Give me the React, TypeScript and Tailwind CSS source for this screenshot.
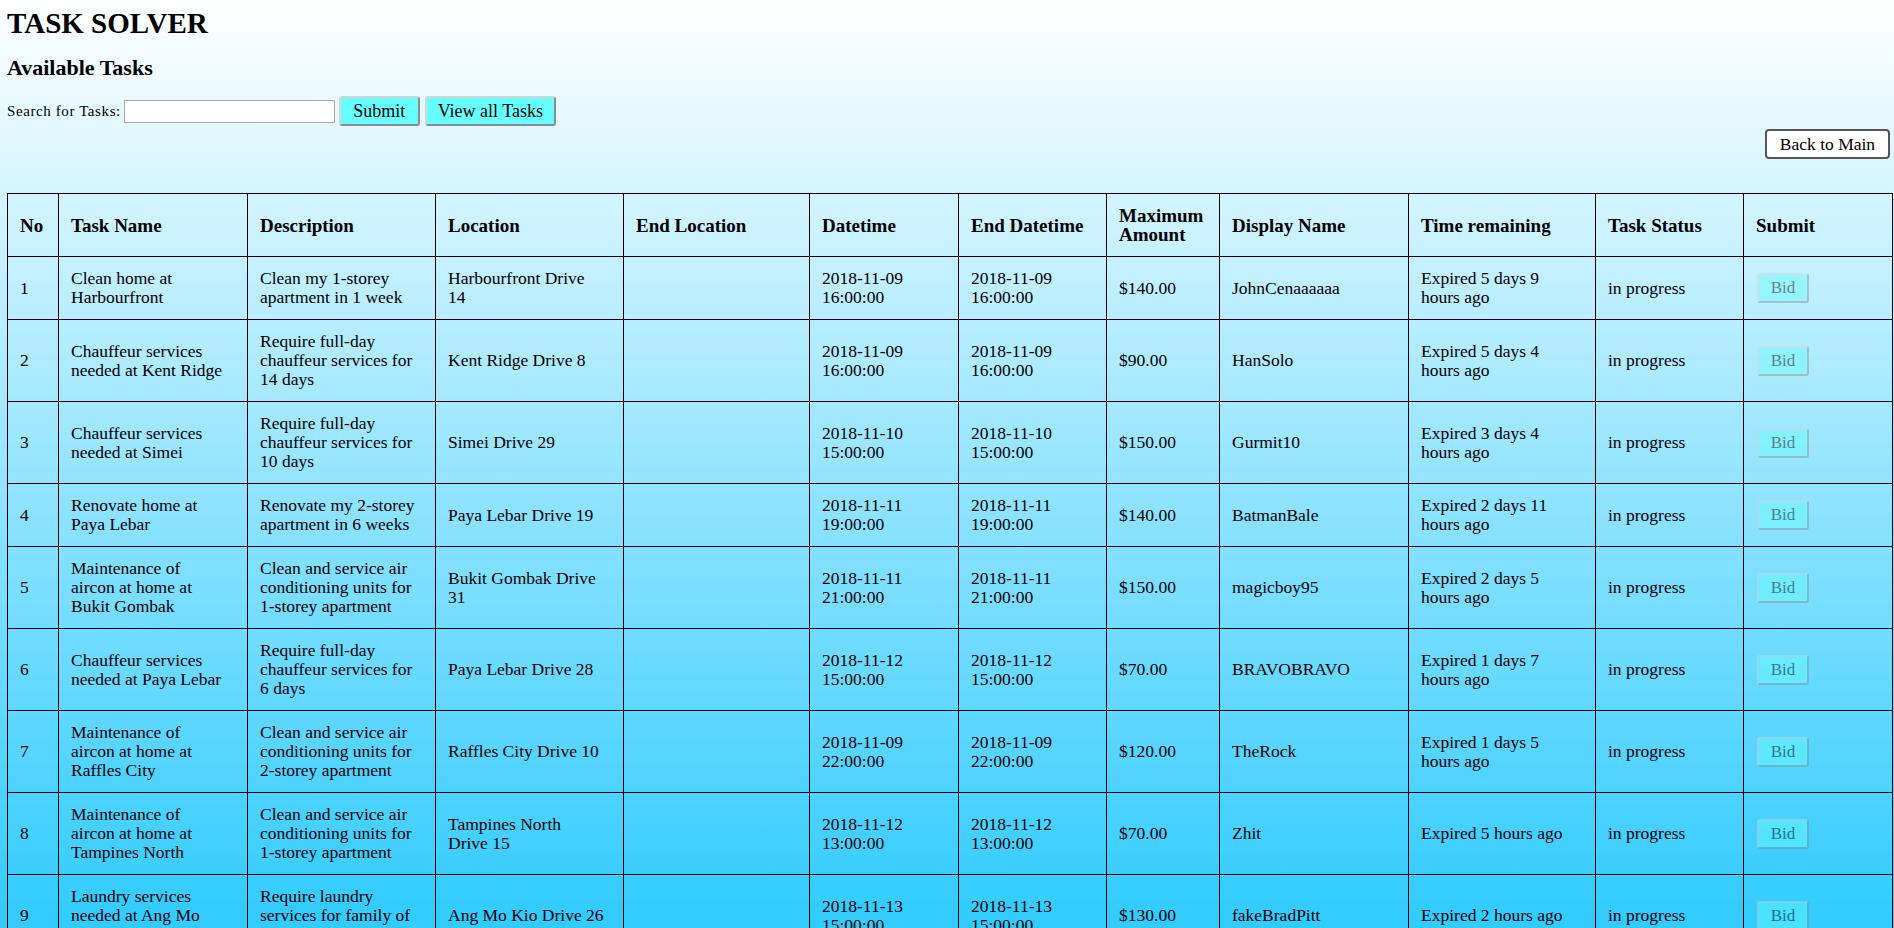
import React from "react";

type Row = {
  no: string;
  name: string[];
  desc: string[];
  loc: string[];
  start: string[];
  end: string[];
  amount: string;
  display: string;
  remain: string[];
};

const rows: Row[] = [
  {
    no: "1",
    name: ["Clean home at", "Harbourfront"],
    desc: ["Clean my 1-storey", "apartment in 1 week"],
    loc: ["Harbourfront Drive", "14"],
    start: ["2018-11-09", "16:00:00"],
    end: ["2018-11-09", "16:00:00"],
    amount: "$140.00",
    display: "JohnCenaaaaaa",
    remain: ["Expired 5 days 9", "hours ago"],
  },
  {
    no: "2",
    name: ["Chauffeur services", "needed at Kent Ridge"],
    desc: ["Require full-day", "chauffeur services for", "14 days"],
    loc: ["Kent Ridge Drive 8"],
    start: ["2018-11-09", "16:00:00"],
    end: ["2018-11-09", "16:00:00"],
    amount: "$90.00",
    display: "HanSolo",
    remain: ["Expired 5 days 4", "hours ago"],
  },
  {
    no: "3",
    name: ["Chauffeur services", "needed at Simei"],
    desc: ["Require full-day", "chauffeur services for", "10 days"],
    loc: ["Simei Drive 29"],
    start: ["2018-11-10", "15:00:00"],
    end: ["2018-11-10", "15:00:00"],
    amount: "$150.00",
    display: "Gurmit10",
    remain: ["Expired 3 days 4", "hours ago"],
  },
  {
    no: "4",
    name: ["Renovate home at", "Paya Lebar"],
    desc: ["Renovate my 2-storey", "apartment in 6 weeks"],
    loc: ["Paya Lebar Drive 19"],
    start: ["2018-11-11", "19:00:00"],
    end: ["2018-11-11", "19:00:00"],
    amount: "$140.00",
    display: "BatmanBale",
    remain: ["Expired 2 days 11", "hours ago"],
  },
  {
    no: "5",
    name: ["Maintenance of", "aircon at home at", "Bukit Gombak"],
    desc: ["Clean and service air", "conditioning units for", "1-storey apartment"],
    loc: ["Bukit Gombak Drive", "31"],
    start: ["2018-11-11", "21:00:00"],
    end: ["2018-11-11", "21:00:00"],
    amount: "$150.00",
    display: "magicboy95",
    remain: ["Expired 2 days 5", "hours ago"],
  },
  {
    no: "6",
    name: ["Chauffeur services", "needed at Paya Lebar"],
    desc: ["Require full-day", "chauffeur services for", "6 days"],
    loc: ["Paya Lebar Drive 28"],
    start: ["2018-11-12", "15:00:00"],
    end: ["2018-11-12", "15:00:00"],
    amount: "$70.00",
    display: "BRAVOBRAVO",
    remain: ["Expired 1 days 7", "hours ago"],
  },
  {
    no: "7",
    name: ["Maintenance of", "aircon at home at", "Raffles City"],
    desc: ["Clean and service air", "conditioning units for", "2-storey apartment"],
    loc: ["Raffles City Drive 10"],
    start: ["2018-11-09", "22:00:00"],
    end: ["2018-11-09", "22:00:00"],
    amount: "$120.00",
    display: "TheRock",
    remain: ["Expired 1 days 5", "hours ago"],
  },
  {
    no: "8",
    name: ["Maintenance of", "aircon at home at", "Tampines North"],
    desc: ["Clean and service air", "conditioning units for", "1-storey apartment"],
    loc: ["Tampines North", "Drive 15"],
    start: ["2018-11-12", "13:00:00"],
    end: ["2018-11-12", "13:00:00"],
    amount: "$70.00",
    display: "Zhit",
    remain: ["Expired 5 hours ago"],
  },
  {
    no: "9",
    name: ["Laundry services", "needed at Ang Mo", "Kio"],
    desc: ["Require laundry", "services for family of", "four"],
    loc: ["Ang Mo Kio Drive 26"],
    start: ["2018-11-13", "15:00:00"],
    end: ["2018-11-13", "15:00:00"],
    amount: "$130.00",
    display: "fakeBradPitt",
    remain: ["Expired 2 hours ago"],
  },
];

const colWidths = [51, 189, 188, 188, 186, 149, 148, 113, 189, 187, 148, 149];

function Lines({ lines }: { lines: string[] }) {
  return (
    <>
      {lines.map((l, i) => (
        <React.Fragment key={i}>
          {i > 0 && <br />}
          {l}
        </React.Fragment>
      ))}
    </>
  );
}

const td =
  "border border-black px-3 py-3 align-middle text-left whitespace-nowrap text-[17.5px] leading-[19px] font-normal";
const th =
  "border border-black px-3 py-3 align-middle text-left whitespace-nowrap text-[19px] leading-[19px] font-bold";

const cyanBtn =
  "bg-[#66ffff] text-black rounded-[3px] border-2 border-t-[#d4d4d4] border-l-[#d4d4d4] border-b-[#8c8c8c] border-r-[#8c8c8c]";

export default function App() {
  return (
    <div
      className="min-h-screen w-full bg-[linear-gradient(to_bottom,#ffffff_0px,#33ccff_910px,#22c6ff_1150px)] text-black pb-10"
      style={{ fontFamily: '"Liberation Serif", "Times New Roman", serif' }}
    >
      <div className="pl-[7px]">
        <h1 className="pt-[9px] text-[29px] leading-[29px] font-bold">TASK SOLVER</h1>
        <h2 className="mt-[19px] text-[22px] leading-[22px] font-bold">Available Tasks</h2>
        <div className="mt-[17px] flex h-[30px] items-center">
          <span className="text-[15px] leading-[17px] tracking-[0.6px]">Search for Tasks:</span>
          <input
            type="text"
            className="ml-[3px] h-[23px] w-[211px] border border-[#a9a9a9] bg-white px-1 outline-none"
          />
          <button className={`ml-[4px] h-[30px] w-[81px] text-[18px] leading-[20px] ${cyanBtn}`}>
            Submit
          </button>
          <button className={`ml-[5px] h-[30px] w-[131px] text-[18px] leading-[20px] ${cyanBtn}`}>
            View all Tasks
          </button>
        </div>
      </div>
      <div className="mt-[3px] flex justify-end pr-[4px]">
        <button className="h-[30px] w-[125px] rounded-[4px] border-2 border-[#555555] bg-white text-[17.5px] leading-[20px]">
          Back to Main
        </button>
      </div>
      <div className="mt-[34px] pl-[7px]">
        <table className="w-[1886px] table-fixed border-collapse">
          <colgroup>
            {colWidths.map((w, i) => (
              <col key={i} style={{ width: w }} />
            ))}
          </colgroup>
          <thead>
            <tr>
              <th className={th}>No</th>
              <th className={th}>Task Name</th>
              <th className={th}>Description</th>
              <th className={th}>Location</th>
              <th className={th}>End Location</th>
              <th className={th}>Datetime</th>
              <th className={th}>End Datetime</th>
              <th className={th}>
                Maximum
                <br />
                Amount
              </th>
              <th className={th}>Display Name</th>
              <th className={th}>Time remaining</th>
              <th className={th}>Task Status</th>
              <th className={th}>Submit</th>
            </tr>
          </thead>
          <tbody>
            {rows.map((r) => (
              <tr key={r.no}>
                <td className={td}>{r.no}</td>
                <td className={td}>
                  <Lines lines={r.name} />
                </td>
                <td className={td}>
                  <Lines lines={r.desc} />
                </td>
                <td className={td}>
                  <Lines lines={r.loc} />
                </td>
                <td className={td}></td>
                <td className={td}>
                  <Lines lines={r.start} />
                </td>
                <td className={td}>
                  <Lines lines={r.end} />
                </td>
                <td className={td}>{r.amount}</td>
                <td className={td}>{r.display}</td>
                <td className={td}>
                  <Lines lines={r.remain} />
                </td>
                <td className={td}>in progress</td>
                <td className={td}>
                  <div className="flex">
                    <button
                      disabled
                      className={`ml-[1px] h-[30px] w-[52px] text-[17px] leading-[20px] opacity-45 text-[#3d5a60] ${cyanBtn}`}
                    >
                      Bid
                    </button>
                  </div>
                </td>
              </tr>
            ))}
          </tbody>
        </table>
      </div>
    </div>
  );
}
